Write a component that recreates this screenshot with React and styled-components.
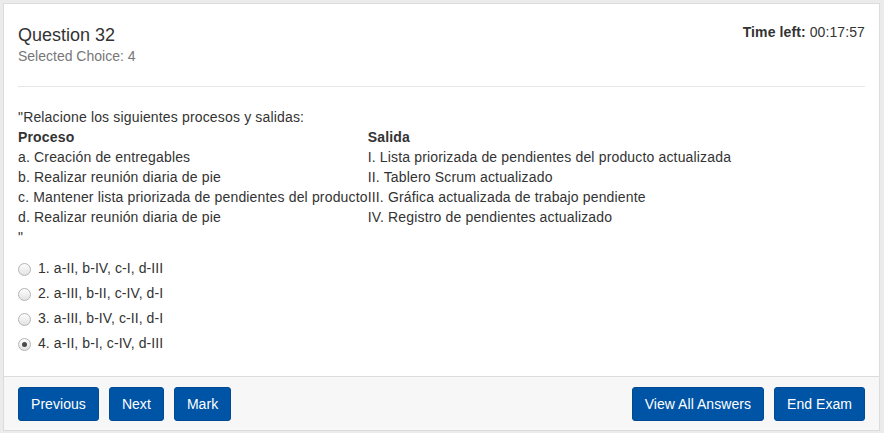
import React from 'react';
import styled, { createGlobalStyle } from 'styled-components';

const GlobalStyle = createGlobalStyle`
    html, body {
        margin: 0;
        padding: 0;
        background: #ebebeb;
    }
    body {
        font-family: "Liberation Sans", Arial, Helvetica, sans-serif;
        font-size: 14px;
        line-height: 1.42857;
        color: #333;
    }
`

const Panel = styled.div`
    margin: 3px 4px 0 3px;
    height: 428px;
    box-sizing: border-box;
    background: #fff;
    border: 1px solid #dcdcdc;
    display: flex;
    flex-direction: column;
`

const Body = styled.div`
    flex: 1;
    padding: 0 14px 0 14px;
`

const Header = styled.div`
    display: flex;
    justify-content: space-between;
    align-items: flex-start;
    padding: 21px 0 20px;
    border-bottom: 1px solid #e6e6e6;
`

const Title = styled.h3`
    margin: 0;
    font-size: 18px;
    font-weight: normal;
    line-height: 20px;
    color: #333;
`

const Subtitle = styled.div`
    color: #777;
    font-size: 14px;
    line-height: 20px;
    margin-top: 1px;
`

const Timer = styled.div`
    font-size: 14px;
    line-height: 20px;
    margin-top: -3px;
    letter-spacing: 0.1px;
    strong {
        font-weight: bold;
    }
`

const Question = styled.div`
    margin-top: 20px;
    line-height: 20px;
    letter-spacing: 0.16px;
`

const MatchTable = styled.div`
    display: grid;
    grid-template-columns: auto auto;
    justify-content: start;
`

const Cell = styled.div`
    font-weight: ${props => (props.head ? 'bold' : 'normal')};
    white-space: nowrap;
`

const Choices = styled.div`
    margin-top: 12px;
    display: flex;
    flex-direction: column;
    gap: 5px;
    letter-spacing: 0.08px;
`

const Choice = styled.label`
    display: flex;
    align-items: center;
    gap: 7px;
    height: 20px;
`

const Radio = styled.span`
    width: 11px;
    height: 11px;
    border-radius: 50%;
    border: 1px solid #b4b4b4;
    background: linear-gradient(#fdfdfd, #e2e2e2);
    display: inline-flex;
    align-items: center;
    justify-content: center;
    &::after {
        content: '';
        width: 5px;
        height: 5px;
        border-radius: 50%;
        background: ${props => (props.checked ? '#4a4a4a' : 'transparent')};
    }
`

const Footer = styled.div`
    display: flex;
    justify-content: space-between;
    background: #f7f7f7;
    border-top: 1px solid #dcdcdc;
    padding: 10px 14px 9px;
`

const ButtonGroup = styled.div`
    display: flex;
    gap: 10px;
`

const Button = styled.button`
    font-family: inherit;
    font-size: 14px;
    line-height: 20px;
    color: #fff;
    background: #0054a6;
    border: 1px solid #004a94;
    border-radius: 3px;
    padding: 6px 12px;
    letter-spacing: 0.05px;
    cursor: pointer;
`

const rows = [
    ['a. Creación de entregables', 'I. Lista priorizada de pendientes del producto actualizada'],
    ['b. Realizar reunión diaria de pie', 'II. Tablero Scrum actualizado'],
    ['c. Mantener lista priorizada de pendientes del producto', 'III. Gráfica actualizada de trabajo pendiente'],
    ['d. Realizar reunión diaria de pie', 'IV. Registro de pendientes actualizado'],
]

const choices = [
    '1. a-II, b-IV, c-I, d-III',
    '2. a-III, b-II, c-IV, d-I',
    '3. a-III, b-IV, c-II, d-I',
    '4. a-II, b-I, c-IV, d-III',
]

const App = () => (
    <>
        <GlobalStyle />
        <Panel>
            <Body>
                <Header>
                    <div>
                        <Title>Question 32</Title>
                        <Subtitle>Selected Choice: 4</Subtitle>
                    </div>
                    <Timer><strong>Time left:</strong> 00:17:57</Timer>
                </Header>
                <Question>
                    <div>"Relacione los siguientes procesos y salidas:</div>
                    <MatchTable>
                        <Cell head>Proceso</Cell>
                        <Cell head>Salida</Cell>
                        {rows.map(([a, b]) => (
                            <React.Fragment key={a + b}>
                                <Cell>{a}</Cell>
                                <Cell>{b}</Cell>
                            </React.Fragment>
                        ))}
                    </MatchTable>
                    <div>"</div>
                </Question>
                <Choices>
                    {choices.map((c, i) => (
                        <Choice key={c}>
                            <Radio checked={i === 3} />
                            <span>{c}</span>
                        </Choice>
                    ))}
                </Choices>
            </Body>
            <Footer>
                <ButtonGroup>
                    <Button>Previous</Button>
                    <Button>Next</Button>
                    <Button>Mark</Button>
                </ButtonGroup>
                <ButtonGroup>
                    <Button>View All Answers</Button>
                    <Button>End Exam</Button>
                </ButtonGroup>
            </Footer>
        </Panel>
    </>
)

export default App
